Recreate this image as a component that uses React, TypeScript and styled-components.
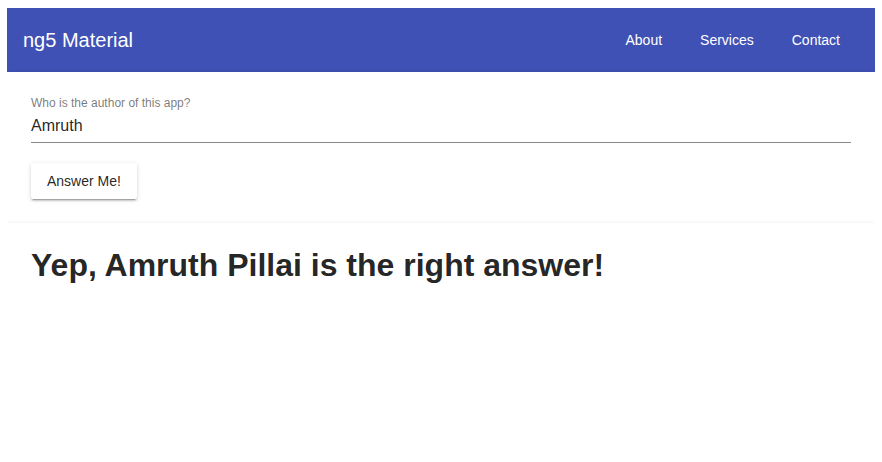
import React, { FC } from 'react';
import styled, { createGlobalStyle } from 'styled-components';

const GlobalStyle = createGlobalStyle`
  body {
    margin: 8px 7px;
    background: #fff;
    font-family: 'Liberation Sans', Arial, sans-serif;
  }
`;

const Toolbar = styled.header`
  align-items: center;
  background-color: #3f51b5;
  color: #fff;
  display: flex;
  height: 64px;
  padding: 0 19px 0 16px;
`;

const Brand = styled.span`
  flex: 1;
  font-size: 20px;
`;

const Nav = styled.nav`
  display: flex;
  gap: 6px;
`;

const NavLink = styled.a`
  cursor: pointer;
  font-size: 14px;
  line-height: 36px;
  padding: 0 16px;
  text-align: center;
`;

const Card = styled.section`
  background: #fff;
  box-shadow: 0 3px 1px -2px rgba(0, 0, 0, 0.2), 0 2px 2px 0 rgba(0, 0, 0, 0.14),
    0 1px 5px 0 rgba(0, 0, 0, 0.12);
  padding: 24px;
`;

const Field = styled.label`
  border-bottom: 1px solid #8a8a8a;
  display: block;
  margin-bottom: 20px;
  padding-bottom: 6px;
`;

const FieldLabel = styled.span`
  color: rgba(0, 0, 0, 0.54);
  display: block;
  font-size: 12px;
  line-height: 14px;
  margin-bottom: 6px;
`;

const FieldInput = styled.input`
  background: transparent;
  border: none;
  color: rgba(0, 0, 0, 0.87);
  font-family: inherit;
  font-size: 16px;
  line-height: 20px;
  outline: none;
  padding: 0;
  width: 100%;
`;

const RaisedButton = styled.button`
  background: #fff;
  border: none;
  border-radius: 2px;
  box-shadow: 0 3px 1px -2px rgba(0, 0, 0, 0.2), 0 2px 2px 0 rgba(0, 0, 0, 0.14),
    0 1px 5px 0 rgba(0, 0, 0, 0.12);
  color: rgba(0, 0, 0, 0.87);
  font-family: inherit;
  font-size: 14px;
  height: 36px;
  padding: 0 16px;
`;

const Answer = styled.h1`
  color: rgba(0, 0, 0, 0.87);
  font-size: 32px;
  font-weight: bold;
  line-height: 36px;
  margin: 0;
`;

const navItems = ['About', 'Services', 'Contact'];

const App: FC = () => (
  <>
    <GlobalStyle />
    <Toolbar>
      <Brand>ng5 Material</Brand>
      <Nav>
        {navItems.map(item => (
          <NavLink key={item}>{item}</NavLink>
        ))}
      </Nav>
    </Toolbar>
    <Card>
      <Field>
        <FieldLabel>Who is the author of this app?</FieldLabel>
        <FieldInput defaultValue="Amruth" />
      </Field>
      <RaisedButton>Answer Me!</RaisedButton>
    </Card>
    <Card>
      <Answer>Yep, Amruth Pillai is the right answer!</Answer>
    </Card>
  </>
);

export default App;
